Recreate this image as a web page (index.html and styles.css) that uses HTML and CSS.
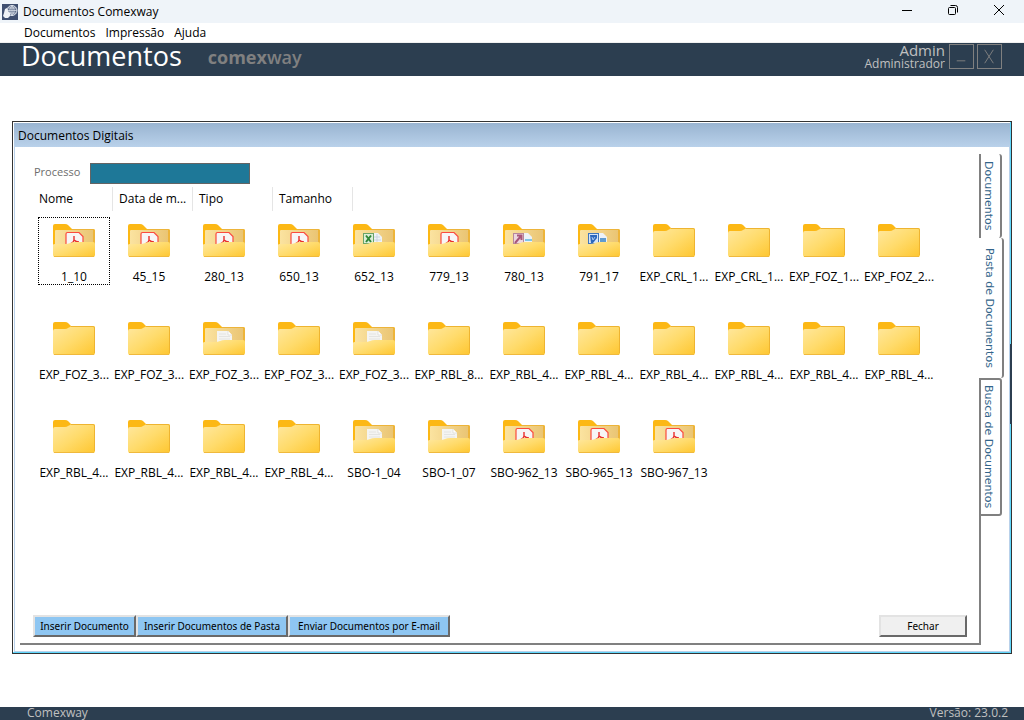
FILE: index.html
```html
<!DOCTYPE html>
<html lang="pt-BR">
<head>
  <meta charset="UTF-8">
  <title>Documentos Comexway</title>
  <link rel="stylesheet" href="styles.css">
</head>
<body>
  <svg class="sprite" aria-hidden="true">
    <defs>
      <linearGradient id="front" x1="0" y1="0" x2="1" y2="1">
        <stop offset="0" stop-color="#ffe8a0"/>
        <stop offset="0.5" stop-color="#ffdb6b"/>
        <stop offset="1" stop-color="#fec62f"/>
      </linearGradient>
      <linearGradient id="inside" x1="0" y1="0" x2="1" y2="0">
        <stop offset="0" stop-color="#fbe3a0"/>
        <stop offset="1" stop-color="#eac574"/>
      </linearGradient>
      <symbol id="folder" viewBox="0 0 42 34">
        <path d="M0 10V2Q0 0 2 0H12Q14 0 15 1L18 4H40Q42 4 42 6V12H0Z" fill="#fcb815"/>
        <path d="M0 9Q0 7 2 7H12Q14 7 15 6L17 5Q18 4 20 4H40Q42 4 42 6V31Q42 33 40 33H2Q0 33 0 31Z" fill="url(#front)"/>
        <path d="M18 4.500H40Q41.500 4.500 41.500 6V31" fill="none" stroke="#eeb430"/>
        <path d="M1 32.500H41" stroke="#f0b93c"/>
      </symbol>
      <symbol id="back" viewBox="0 0 42 34">
        <path d="M0 31V2Q0 0 2 0H12Q14 0 15 1L19 5H40Q42 5 42 7V31Z" fill="#fcb815"/>
        <path d="M19 5H40Q42 5 42 7V24H19Z" fill="#edb43a"/>
        <path d="M2 7Q2 6 3 6H40V24H2Z" fill="url(#inside)"/>
      </symbol>
      <symbol id="flap" viewBox="0 0 42 34">
        <path d="M0 21Q0 20 2 20H12Q15 20 17 19Q19 18 22 18H40Q42 18 42 20V31Q42 33 40 33H2Q0 33 0 31Z" fill="url(#front)"/>
        <path d="M1 32.500H41" stroke="#f0b93c"/>
      </symbol>
      <symbol id="folder-pdf" viewBox="0 0 42 34">
        <use href="#back"/>
        <path d="M13 26V10Q13 8.500 14.500 8.500H26L30 12.500V26Z" fill="#f7f5f6" stroke="#fb4a3e" stroke-width="1.200"/>
        <path d="M21 12V16Q21 18 18 19.500M21 16Q23 18 26 18" fill="none" stroke="#e8302c" stroke-width="1.400"/>
        <use href="#flap"/>
      </symbol>
      <symbol id="folder-doc" viewBox="0 0 42 34">
        <use href="#back"/>
        <path d="M14 26V9H25L29 13V26Z" fill="#f4f4f2"/>
        <path d="M25 9V13H29" fill="#fff" stroke="#d9d9d6" stroke-width="0.700"/>
        <path d="M16 12H23M16 14.500H27M16 17H27" stroke="#e4e4e2"/>
        <use href="#flap"/>
      </symbol>
      <symbol id="folder-xls" viewBox="0 0 42 34">
        <use href="#back"/>
        <path d="M19 9H25L29 13V24H19Z" fill="#eef3f8"/>
        <path d="M21 13H27M21 16H28M24 10V19" stroke="#c3cfd9" stroke-width="0.800"/>
        <rect x="10.500" y="9.500" width="10" height="10" fill="#dcefd9" stroke="#6ba568"/>
        <path d="M13 11.500L18 18M18 11.500L13 18" stroke="#2f8738" stroke-width="2"/>
        <use href="#flap"/>
      </symbol>
      <symbol id="folder-mdb" viewBox="0 0 42 34">
        <use href="#back"/>
        <path d="M19 9H25L29 13V24H19Z" fill="#edf2f8"/>
        <path d="M22 15H29V17H22Z" fill="#7fc4e8"/>
        <rect x="10.500" y="9.500" width="10" height="10" fill="#ecd6df" stroke="#b7879c"/>
        <path d="M12 19L18 12M14 11.500H18.500V16" fill="none" stroke="#a8557a" stroke-width="2"/>
        <use href="#flap"/>
      </symbol>
      <symbol id="folder-word" viewBox="0 0 42 34">
        <use href="#back"/>
        <path d="M19 9H25L29 13V24H19Z" fill="#edf2f8"/>
        <path d="M22 14H28V18H22Z" fill="#5f9bd0"/>
        <rect x="10.500" y="9.500" width="10" height="10" fill="#d5e4f7" stroke="#3f76bd"/>
        <path d="M12 11H19V14L15 19H13Z" fill="#2c68bd"/>
        <path d="M14 13L15 16L17 13" fill="none" stroke="#a9c6ec"/>
        <use href="#flap"/>
      </symbol>
    </defs>
  </svg>

  <div class="titlebar">
    <svg class="app-icon" viewBox="0 0 16 16">
      <rect width="16" height="16" fill="#3f4f70"/>
      <circle cx="10" cy="6.500" r="5" fill="#5f6e8b" stroke="#dfe5ee"/>
      <path d="M5 6.500H15M6 4H14M6 9H14M10 1.500V11.500M10 1.500Q5.500 6.500 10 11.500M10 1.500Q14.500 6.500 10 11.500" fill="none" stroke="#dfe5ee" stroke-width="0.700"/>
      <path d="M3 5L5 4L6 7L8 9V12L6 14H3L1 12L2 9Z" fill="#eef1f5"/>
    </svg>
    <span class="app-title">Documentos Comexway</span>
    <div class="sys-buttons">
      <button type="button" aria-label="Minimizar"><svg viewBox="0 0 12 12"><path d="M1 6.500H11"/></svg></button>
      <button type="button" aria-label="Restaurar"><svg viewBox="0 0 12 12"><rect x="1.500" y="3.500" width="7" height="7" rx="1"/><path d="M3.500 1.500H8.500Q10.500 1.500 10.500 3.500V8.500"/></svg></button>
      <button type="button" aria-label="Fechar janela"><svg viewBox="0 0 12 12"><path d="M1 1L11 11M11 1L1 11"/></svg></button>
    </div>
  </div>

  <nav class="menu">
    <a href="#">Documentos</a>
    <a href="#">Impressão</a>
    <a href="#">Ajuda</a>
  </nav>

  <header class="header">
    <h1>Documentos</h1>
    <span class="brand">comex<b>way</b></span>
    <div class="user">
      <span class="user-name">Admin</span>
      <span class="user-role">Administrador</span>
    </div>
    <button type="button" class="box-btn" aria-label="Minimizar"><svg viewBox="0 0 24 24"><path d="M7 16.500H16"/></svg></button>
    <button type="button" class="box-btn" aria-label="Sair"><svg viewBox="0 0 24 24"><path d="M7 5L16 19M16 5L7 19"/></svg></button>
  </header>

  <main>
    <section class="window">
      <h2 class="window-title">Documentos Digitais</h2>
      <div class="window-body">
        <div class="panel">
          <div class="field">
            <label for="processo">Processo</label>
            <input type="text" id="processo" name="processo">
          </div>
          <div class="columns">
            <button type="button">Nome</button>
            <button type="button">Data de m...</button>
            <button type="button">Tipo</button>
            <button type="button">Tamanho</button>
          </div>
          <ul class="files">
            <li><a href="#" class="focused"><svg><use href="#folder-pdf"/></svg><span>1_10</span></a></li>
            <li><a href="#"><svg><use href="#folder-pdf"/></svg><span>45_15</span></a></li>
            <li><a href="#"><svg><use href="#folder-pdf"/></svg><span>280_13</span></a></li>
            <li><a href="#"><svg><use href="#folder-pdf"/></svg><span>650_13</span></a></li>
            <li><a href="#"><svg><use href="#folder-xls"/></svg><span>652_13</span></a></li>
            <li><a href="#"><svg><use href="#folder-pdf"/></svg><span>779_13</span></a></li>
            <li><a href="#"><svg><use href="#folder-mdb"/></svg><span>780_13</span></a></li>
            <li><a href="#"><svg><use href="#folder-word"/></svg><span>791_17</span></a></li>
            <li><a href="#"><svg><use href="#folder"/></svg><span>EXP_CRL_1...</span></a></li>
            <li><a href="#"><svg><use href="#folder"/></svg><span>EXP_CRL_1...</span></a></li>
            <li><a href="#"><svg><use href="#folder"/></svg><span>EXP_FOZ_1...</span></a></li>
            <li><a href="#"><svg><use href="#folder"/></svg><span>EXP_FOZ_2...</span></a></li>

            <li><a href="#"><svg><use href="#folder"/></svg><span>EXP_FOZ_3...</span></a></li>
            <li><a href="#"><svg><use href="#folder"/></svg><span>EXP_FOZ_3...</span></a></li>
            <li><a href="#"><svg><use href="#folder-doc"/></svg><span>EXP_FOZ_3...</span></a></li>
            <li><a href="#"><svg><use href="#folder"/></svg><span>EXP_FOZ_3...</span></a></li>
            <li><a href="#"><svg><use href="#folder-doc"/></svg><span>EXP_FOZ_3...</span></a></li>
            <li><a href="#"><svg><use href="#folder"/></svg><span>EXP_RBL_8...</span></a></li>
            <li><a href="#"><svg><use href="#folder"/></svg><span>EXP_RBL_4...</span></a></li>
            <li><a href="#"><svg><use href="#folder"/></svg><span>EXP_RBL_4...</span></a></li>
            <li><a href="#"><svg><use href="#folder"/></svg><span>EXP_RBL_4...</span></a></li>
            <li><a href="#"><svg><use href="#folder"/></svg><span>EXP_RBL_4...</span></a></li>
            <li><a href="#"><svg><use href="#folder"/></svg><span>EXP_RBL_4...</span></a></li>
            <li><a href="#"><svg><use href="#folder"/></svg><span>EXP_RBL_4...</span></a></li>

            <li><a href="#"><svg><use href="#folder"/></svg><span>EXP_RBL_4...</span></a></li>
            <li><a href="#"><svg><use href="#folder"/></svg><span>EXP_RBL_4...</span></a></li>
            <li><a href="#"><svg><use href="#folder"/></svg><span>EXP_RBL_4...</span></a></li>
            <li><a href="#"><svg><use href="#folder"/></svg><span>EXP_RBL_4...</span></a></li>
            <li><a href="#"><svg><use href="#folder-doc"/></svg><span>SBO-1_04</span></a></li>
            <li><a href="#"><svg><use href="#folder-doc"/></svg><span>SBO-1_07</span></a></li>
            <li><a href="#"><svg><use href="#folder-pdf"/></svg><span>SBO-962_13</span></a></li>
            <li><a href="#"><svg><use href="#folder-pdf"/></svg><span>SBO-965_13</span></a></li>
            <li><a href="#"><svg><use href="#folder-pdf"/></svg><span>SBO-967_13</span></a></li>
          </ul>
          <div class="actions">
            <button type="button" class="btn blue w-small">Inserir Documento</button>
            <button type="button" class="btn blue w-medium">Inserir Documentos de Pasta</button>
            <button type="button" class="btn blue w-large">Enviar Documentos por E-mail</button>
            <button type="button" class="btn close">Fechar</button>
          </div>
        </div>
        <div class="tabs" role="tablist">
          <button type="button" role="tab" class="tab tab-first">Documentos</button>
          <button type="button" role="tab" class="tab active" aria-selected="true">Pasta de Documentos</button>
          <button type="button" role="tab" class="tab">Busca de Documentos</button>
        </div>
      </div>
      <span class="grip"></span>
    </section>
  </main>

  <footer>
    <span>Comexway</span>
    <span>Versão: 23.0.2</span>
  </footer>
</body>
</html>
```
FILE: styles.css
```css
* {
  padding: 0;
  margin: 0;
  box-sizing: border-box;
}
body {
  min-height: 100vh;
  display: flex;
  flex-direction: column;
  background: white;
  color: black;
  font-family: "Open Sans", "Noto Sans", sans-serif;
  font-size: 12px;
}
button {
  font: inherit;
  color: inherit;
  border: none;
  background: none;
}
a {
  color: inherit;
  text-decoration: none;
}
.sprite {
  position: absolute;
  width: 0;
  height: 0;
}

/* system title bar and menu */
.titlebar {
  height: 23px;
  display: flex;
  align-items: center;
  gap: 5px;
  padding-left: 2px;
  background: #eff4f9;
}
.app-icon {
  width: 16px;
  height: 16px;
}
.sys-buttons {
  margin-left: auto;
  display: flex;
}
.sys-buttons button {
  width: 46px;
  height: 22px;
}
.sys-buttons svg {
  width: 12px;
  height: 12px;
  fill: none;
  stroke: black;
}
.sys-buttons button:last-child {
  margin-right: 2px;
}
.menu {
  height: 20px;
  display: flex;
  align-items: center;
  gap: 10px;
  padding-left: 24px;
  line-height: 18px;
  border-bottom: 1px solid #f0f0f0;
}

.header {
  height: 33px;
  display: flex;
  align-items: flex-start;
  padding: 0 22px 0 21px;
  background: #2c3e50;
}
.header h1 {
  font-size: 27px;
  font-weight: 400;
  line-height: 26px;
  color: white;
}
.brand {
  margin-left: 26px;
  font-size: 18px;
  font-weight: 700;
  line-height: 28px;
  color: #808080;
}
.brand b {
  font-weight: 600;
}
.user {
  margin-left: auto;
  margin-right: 4px;
  display: flex;
  flex-direction: column;
  align-items: flex-end;
  color: #c0c0c0;
}
.user-name {
  font-size: 15px;
  line-height: 15px;
}
.user-role {
  line-height: 12px;
}
.box-btn {
  width: 25px;
  height: 25px;
  margin-top: 1px;
  border: 1px solid #808080;
}
.box-btn + .box-btn {
  margin-left: 3px;
}
.box-btn svg {
  display: block;
  fill: none;
  stroke: #808080;
}

main {
  flex: 1;
  display: flex;
  padding: 45px 12px 53px;
}
.window {
  flex: 1;
  display: flex;
  flex-direction: column;
  position: relative;
  border: 1px solid #333;
  padding: 1px 0 0 1px;
  box-shadow: inset -1px -1px #5fd7fb;
}
.window-title {
  height: 24px;
  margin-right: 1px;
  padding-left: 4px;
  font-size: 12px;
  font-weight: 400;
  line-height: 25px;
  background: linear-gradient(#99b4d1, #b9d1ea);
}
.window-body {
  flex: 1;
  display: flex;
  margin: 0 1px 1px 0;
  padding: 7px 5px 6px;
  border: 1px solid #b9d1ea;
  border-top: none;
}
.grip {
  position: absolute;
  top: 222px;
  right: -1px;
  width: 2px;
  height: 80px;
  background: #2c3e50;
}

.panel {
  flex: 1;
  display: flex;
  flex-direction: column;
  padding: 9px 12px 6px 13px;
  border: solid #808080;
  border-width: 0 2px 2px 0;
}
.field {
  display: flex;
  align-items: flex-start;
  gap: 12px;
}
.field label {
  width: 45px;
  padding-left: 1px;
  font-size: 11px;
  line-height: 18px;
  color: #6d6d6d;
}
.field input {
  width: 160px;
  height: 21px;
  border: 1px solid #646464;
  background: #1e7898;
  color: white;
}
.columns {
  display: flex;
  margin-top: 3px;
}
.columns button {
  width: 80px;
  height: 24px;
  padding: 0 0 1px 6px;
  text-align: left;
  border-right: 1px solid #e5e5e5;
}
.files {
  flex: 1;
  display: grid;
  grid-template-columns: repeat(auto-fill, 72px);
  grid-auto-rows: 68px;
  gap: 30px 3px;
  margin: 6px 0 0 5px;
  list-style: none;
}
.files a {
  height: 68px;
  display: flex;
  flex-direction: column;
  align-items: center;
  padding-top: 6px;
  border: 1px solid transparent;
  white-space: nowrap;
}
.files a.focused {
  border: 1px dotted black;
}
.files svg {
  flex-shrink: 0;
  width: 42px;
  height: 34px;
}
.files span {
  margin-top: 11px;
  line-height: 16px;
}

.actions {
  display: flex;
}
.btn {
  height: 22px;
  font-family: "Noto Sans", sans-serif;
  font-size: 10px;
  white-space: nowrap;
  border: 2px solid;
  border-color: #e3e3e3 #696969 #696969 #e3e3e3;
}
.blue {
  background: #8ec6f2;
}
.w-small {
  width: 103px;
}
.w-medium {
  width: 152px;
}
.w-large {
  width: 162px;
}
.close {
  width: 88px;
  margin-left: auto;
  background: #f0f0f0;
}

.tabs {
  width: 25px;
  display: flex;
  flex-direction: column;
  align-items: flex-start;
  margin-left: -2px;
}
.tab {
  width: 23px;
  height: 138px;
  padding-right: 4px;
  writing-mode: vertical-rl;
  font-family: "DejaVu Sans", sans-serif;
  font-size: 11px;
  line-height: 16px;
  color: #33658a;
  background: white;
  border: 2px solid #808080;
  border-radius: 0 3px 3px 0;
}
.tab-first {
  height: 84px;
  border-width: 0 2px;
}
.tab.active {
  width: 25px;
  height: 140px;
  border-width: 0 2px 0 0;
}

footer {
  height: 13px;
  display: flex;
  justify-content: space-between;
  padding: 0 16px 0 27px;
  line-height: 12px;
  background: #2c3e50;
  color: #c0c0c0;
}
```
